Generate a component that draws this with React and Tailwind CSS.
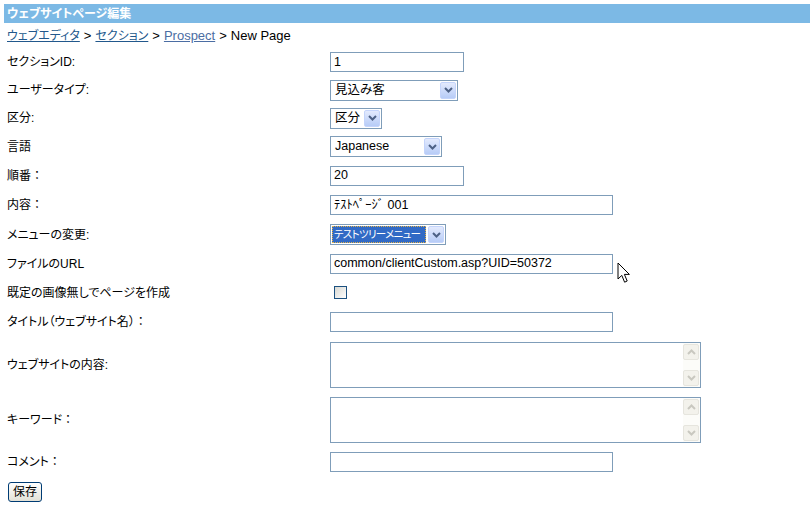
import React from 'react'

// shared pieces
const Chevron = ({ color = '#4d6185' }) => (
    <svg width="9" height="6" viewBox="0 0 9 6">
        <path d="M1 1 L4.5 4.5 L8 1" fill="none" stroke={color} strokeWidth="2" />
    </svg>
)

const ChevronUp = () => (
    <svg width="9" height="6" viewBox="0 0 9 6">
        <path d="M1 5 L4.5 1.5 L8 5" fill="none" stroke="#c9c8c0" strokeWidth="2" />
    </svg>
)

// full-width colon keeps its full width
const Colon = () => <span className="[font-feature-settings:normal]">：</span>

const TextBox = ({ className, value }) => (
    <div className={"h-[20px] border border-[#7f9db9] bg-white pl-[3px] flex items-center text-[12.5px] text-black whitespace-nowrap " + className}>
        {value}
    </div>
)

const SelectBox = ({ className, value, selected }) => (
    <div className={"h-[21px] border border-[#7f9db9] bg-white flex items-center p-[1px] text-[12.5px] " + className}>
        {selected ? (
            <span className="flex-1 min-w-0 overflow-hidden h-full flex items-center pl-[2px] bg-[#316ac5] text-white text-[10.5px] tracking-[-0.7px] outline outline-1 outline-dotted outline-[#e3b34a] -outline-offset-1 whitespace-nowrap [font-feature-settings:'palt']">
                {value}
            </span>
        ) : (
            <span className="flex-1 min-w-0 pl-[3px] whitespace-nowrap">{value}</span>
        )}
        <span className="ml-[2px] w-[16px] h-[17px] shrink-0 rounded-[2px] border border-[#c4d4fb] bg-linear-to-b from-[#e3eafd] to-[#b7ccf7] flex items-center justify-center">
            <Chevron />
        </span>
    </div>
)

const TextArea = () => (
    <div className="w-[371px] h-[46px] border border-[#7f9db9] bg-white flex justify-end">
        <div className="w-[17px] h-full bg-[#fcfcf9] flex flex-col justify-between py-[1px]">
            <span className="w-[16px] h-[16px] rounded-[2px] border border-[#e6e5de] bg-[#f3f2ec] flex items-center justify-center">
                <ChevronUp />
            </span>
            <span className="w-[16px] h-[16px] rounded-[2px] border border-[#e6e5de] bg-[#f3f2ec] flex items-center justify-center">
                <Chevron color="#c9c8c0" />
            </span>
        </div>
    </div>
)

const Row = ({ h, label, children }) => (
    <div className={"flex items-center " + h}>
        <div className="w-[323px] text-[12px] text-black whitespace-nowrap">{label}</div>
        {children}
    </div>
)

const Cursor = () => (
    <svg className="absolute left-[617px] top-[262px]" width="14" height="23" viewBox="0 0 14 23">
        <path d="M1 1 L1 17 L4.8 13.4 L7.6 20.2 L10.2 19 L7.4 12.4 L12.4 12.4 Z" fill="#fff" stroke="#000" strokeWidth="1" strokeLinejoin="miter" />
    </svg>
)

export default function App() {
    return (
        <div className="relative w-[810px] h-[509px] bg-white pt-[4px] pl-[4px] font-['Liberation_Sans','Noto_Sans_CJK_JP',sans-serif] leading-none overflow-hidden">
            {/* title bar */}
            <div className="h-[19px] bg-[#7cb9e5] text-white font-bold text-[12px] pl-[3px] flex items-center [font-feature-settings:'palt']">
                ウェブサイトページ編集
            </div>

            <div className="pl-[3px] [font-feature-settings:'palt']">
                {/* breadcrumb */}
                <div className="h-[25px] flex items-center text-[13px] text-black gap-[4px]">
                    <a href="#" className="text-[12px] text-[#22588c] underline">ウェブエディタ</a>
                    <span>&gt;</span>
                    <a href="#" className="text-[12px] text-[#22588c] underline">セクション</a>
                    <span>&gt;</span>
                    <a href="#" className="text-[#4b6da3] underline">Prospect</a>
                    <span>&gt;</span>
                    <span>New Page</span>
                </div>

                {/* form */}
                <Row h="h-[28px]" label="セクションID:">
                    <TextBox className="w-[134px]" value="1" />
                </Row>
                <Row h="h-[28px]" label="ユーザータイプ:">
                    <SelectBox className="w-[128px]" value="見込み客" />
                </Row>
                <Row h="h-[28px]" label="区分:">
                    <SelectBox className="w-[52px]" value="区分" />
                </Row>
                <Row h="h-[29px]" label="言語">
                    <SelectBox className="w-[112px]" value="Japanese" />
                </Row>
                <Row h="h-[29px]" label={<>順番<Colon /></>}>
                    <TextBox className="w-[134px]" value="20" />
                </Row>
                <Row h="h-[30px]" label={<>内容<Colon /></>}>
                    <TextBox className="w-[283px]" value="ﾃｽﾄﾍﾟｰｼﾞ 001" />
                </Row>
                <Row h="h-[29px]" label="メニューの変更:">
                    <SelectBox className="w-[116px]" value="テストツリーメニュー" selected />
                </Row>
                <Row h="h-[29px]" label="ファイルのURL">
                    <TextBox className="w-[283px]" value="common/clientCustom.asp?UID=50372" />
                </Row>
                <Row h="h-[29px]" label="既定の画像無しでページを作成">
                    <span className="ml-[4px] w-[13px] h-[13px] border border-[#1c5180] bg-linear-to-br from-[#d8d8d2] to-white" />
                </Row>
                <Row h="h-[30px]" label={<>タイトル（ウェブサイト名）<Colon /></>}>
                    <TextBox className="w-[283px]" value="" />
                </Row>
                <Row h="h-[55px]" label="ウェブサイトの内容:">
                    <TextArea />
                </Row>
                <Row h="h-[55px]" label={<>キーワード<Colon /></>}>
                    <TextArea />
                </Row>
                <Row h="h-[30px]" label={<>コメント<Colon /></>}>
                    <TextBox className="w-[283px]" value="" />
                </Row>

                <div className="pt-[5px] pl-[1px]">
                    <button className="w-[34px] h-[20px] rounded-[3px] border border-[#003c74] bg-linear-to-b from-white to-[#e3e1d6] text-[12px] text-black flex items-center justify-center">
                        保存
                    </button>
                </div>
            </div>

            <Cursor />
        </div>
    )
}
